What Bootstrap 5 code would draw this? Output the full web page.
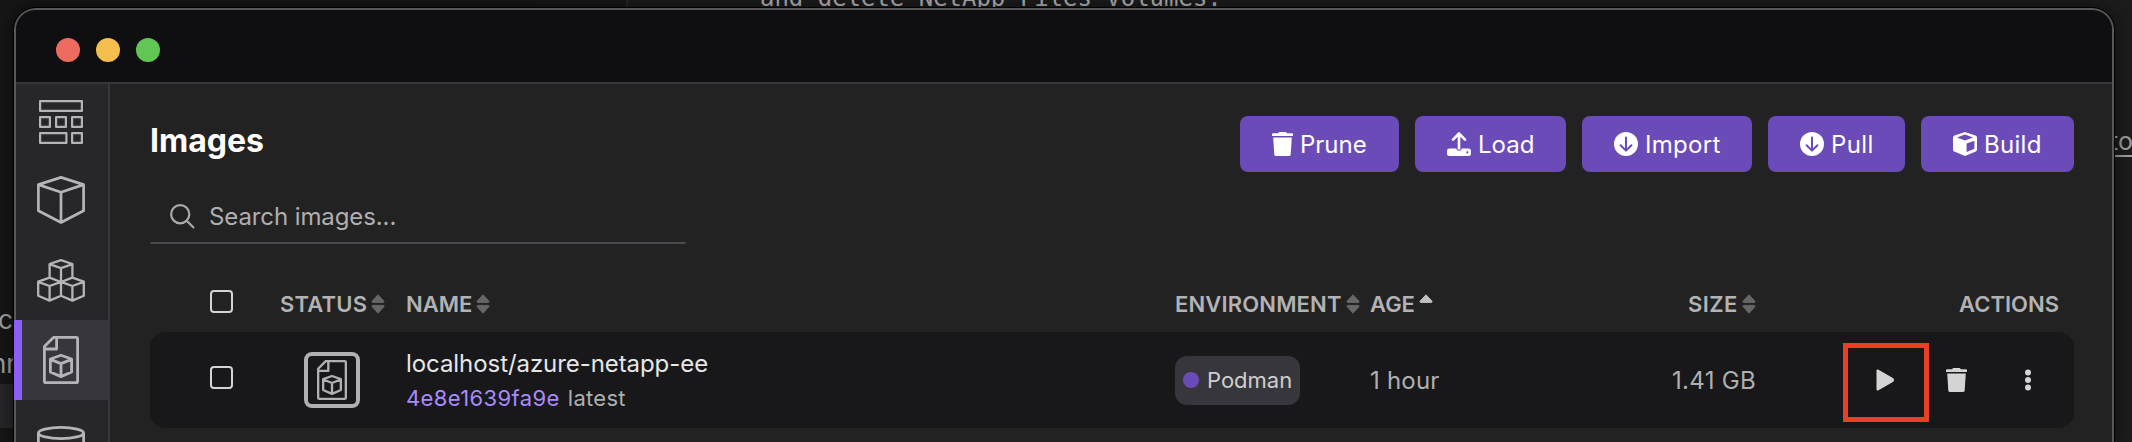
<!DOCTYPE html>
<html lang="en">
<head>
<meta charset="utf-8">
<title>Images</title>
<link href="https://cdn.jsdelivr.net/npm/bootstrap@5.3.0/dist/css/bootstrap.min.css" rel="stylesheet">
<style>
html,body{height:442px;overflow:hidden}
body{position:relative;background:linear-gradient(90deg,#161616 0,#161616 537px,#181818 538px,#181818 626px,#2a2a2a 626px,#2a2a2a 628px,#1c1c1c 628px);font-family:Inter,"Liberation Sans",sans-serif;color:#afafb1;font-size:24px;line-height:1}
svg{display:block;flex:none}
.desk-text{position:absolute;white-space:pre;line-height:1;color:#a2a2a2}
.desk-band{position:absolute;left:0;top:384px;width:14px;height:44px;background:#27272a}
.app-window{position:absolute;left:14px;top:8px;width:2100px;height:434px;border:2px solid #585858;border-bottom:0;border-radius:22px 22px 0 0;background:#222;box-shadow:0 0 0 1px #000,0 0 20px #0009}
.titlebar{height:74px;background:#0f0f11;border-bottom:2px solid #37363d;border-radius:20px 20px 0 0;padding:8px 0 0 40px;gap:16px}
.light{width:24px;height:24px;border-radius:50%}
.sidebar{width:94px;height:358px;background:#27272a;border-right:2px solid #37363d}
.side-item{height:80px;flex:none;color:#b5b5b7;padding-right:2px}
.side-item.first{height:76px}
.side-item.last{height:42px;padding-top:26px}
.side-item.current{background:#37363d;position:relative}
.side-item.current::before{content:"";position:absolute;left:-2px;width:8px;top:0;bottom:0;background:#8b5cf6}
.content{padding:32px 38px 0 40px}
h1{font-size:32px;font-weight:700;color:#fff;line-height:49px;margin:0}
.act{height:56px;border-radius:8px;background:#6a4bb8;color:#fff;padding:2px 0 0 32px;gap:7px;border:0}
.act svg,.find svg{margin-bottom:2px}
.find{width:536px;height:54px;margin-top:18px;border-bottom:2px solid #4b4a50;border-radius:2px;padding:2px 0 0 20px;gap:14px;letter-spacing:-.1px}
.rowgrid{display:grid;grid-template-columns:60px 70px 126px 769px 195px 270px 116px 307px;align-items:center}
.head{height:56px;margin-top:32px;font-weight:600;font-size:22px;color:#b3b3b5}
.data{height:96px;background:#18181a;border-radius:16px}
.cb{width:23px;height:23px;border:2px solid #d4d4d4;border-radius:4px;margin-bottom:5px}
.status-box{width:56px;height:56px;border:4px solid #b0b0b2;border-radius:8px;margin-left:24px;color:#b0b0b2}
.name-line{line-height:35px;white-space:nowrap}
.cell-text{padding-top:2px}
.sub-line{font-size:22px}
.img-id{color:#a78bfa;letter-spacing:.38px}
.pill{width:125px;height:49px;border-radius:12px;background:#37363d;padding-left:8px;gap:8px;color:#cfcfcf;font-size:22px}
.pill i{width:16px;height:16px;border-radius:50%;background:#6a4bb8}
.act-btn{width:71px;height:56px;color:#d4d4d4}
.marker{position:absolute;left:-7px;top:-9px;width:86px;height:79px;border:5px solid #ea4025}
</style>
<script src="https://cdn.jsdelivr.net/npm/bootstrap@5.3.0/dist/js/bootstrap.bundle.min.js"></script>
</head>
<body>
<svg width="0" height="0" class="position-absolute">
<defs>
<symbol id="sort" viewBox="0 0 14 20"><path d="M7 .8 13 7.2Q13.2 8.4 12.2 8.4H1.8Q.8 8.4 1 7.2ZM7 19.200 1 12.600Q.8 11.400 1.800 11.400H12.200Q13.200 11.400 13 12.600Z" fill="#666" stroke="#666" stroke-width="1" stroke-linejoin="round"/></symbol>
<symbol id="trash" viewBox="0 0 21 24"><path d="M6.2 1.2 7 0H14L14.8 1.2H20Q21 1.2 21 2.2V3.9H0V2.2Q0 1.2 1 1.2ZM1.2 5.4H19.8L18.7 22.4Q18.5 24 17 24H4Q2.5 24 2.3 22.4Z" fill="currentColor"/></symbol>
<symbol id="down" viewBox="0 0 24 24"><circle cx="12" cy="12" r="12" fill="currentColor"/><path d="M12 5.4V18M6.6 13.2 12 18.6 17.4 13.2" fill="none" stroke="#6a4bb8" stroke-width="2" stroke-linecap="round" stroke-linejoin="round"/></symbol>
<symbol id="imgfile" viewBox="0 0 36 48"><g fill="none" stroke="currentColor" stroke-width="2.8" stroke-linejoin="round"><path d="M10.5 1.4H33.2Q34.6 1.4 34.6 2.8V45.2Q34.6 46.6 33.2 46.6H2.8Q1.4 46.6 1.4 45.2V10.5ZM13.6 1.4V13H1.4"/><path d="M18 19.2 28.6 23V36L18 40.6 7.4 36V23ZM7.4 23.4 18 27.6 28.6 23.4M18 27.6V40.6"/></g></symbol>
</defs>
</svg>
<div class="desk-text" style="left:760px;top:-16px;font:24px/28px 'DejaVu Sans Mono',monospace;letter-spacing:-.02px;color:#b8b8b8">and delete NetApp Files Volumes.</div>
<div class="desk-text" style="left:-2px;top:307px;font-size:26px">c</div>
<div class="desk-text" style="left:-9px;top:351px;font-size:26px">nn</div>
<div class="desk-band"></div>
<div class="desk-text text-decoration-underline" style="left:2110px;top:129px;font-size:25px;text-underline-offset:5px">to</div>

<div class="app-window">
  <div class="titlebar d-flex align-items-center">
    <span class="light" style="background:#ed6a5f"></span><span class="light" style="background:#f5bf4f"></span><span class="light" style="background:#62c655"></span>
  </div>
  <div class="d-flex">
    <nav class="sidebar d-flex flex-column">
      <a class="side-item first d-flex align-items-center justify-content-center"><svg width="44" height="44" viewBox="0 0 44 44" fill="none" stroke="currentColor" stroke-width="2.2" stroke-linejoin="round"><path d="M1.1 1.1H42.9V10.9H1.1ZM1.1 17.1H10.9V26.9H1.1ZM17.1 17.1H26.9V26.9H17.1ZM33.1 17.1H42.9V26.9H33.1ZM1.1 33.1H27.4V42.9H1.1ZM33.1 33.1H42.9V42.9H33.1Z"/></svg></a>
      <a class="side-item d-flex align-items-center justify-content-center"><svg width="48" height="48" viewBox="0 0 48 48" fill="none" stroke="currentColor" stroke-width="2.7" stroke-linejoin="round"><path d="M24 1.4 46.6 8.6V34.8L24 46.5 1.4 34.8V8.6ZM1.4 8.6 24 16.2 46.6 8.6M24 16.2V46.5"/></svg></a>
      <a class="side-item d-flex align-items-center justify-content-center"><svg width="48" height="43" viewBox="0 0 48 43" fill="none" stroke="currentColor" stroke-width="2.3" stroke-linejoin="round"><path d="M24 1.2 35.4 5V18.6L24 23 12.6 18.6V5ZM12.6 5.2 24 9.2 35.4 5.2M24 9.2V23M12.6 18.6 24 23V36.8L12.6 41.6 1.2 36.8V22.6ZM1.2 22.8 12.6 27 24 22.8M12.6 27V41.6M35.4 18.6 46.8 22.6V36.8L35.4 41.6 24 36.8M24 22.8 35.4 27 46.8 22.8M35.4 27V41.6"/></svg></a>
      <a class="side-item current d-flex align-items-center justify-content-center"><svg width="36" height="48"><use href="#imgfile"/></svg></a>
      <a class="side-item last d-flex align-items-start justify-content-center"><svg width="48" height="16" viewBox="0 0 48 16" fill="none" stroke="currentColor" stroke-width="2.8"><ellipse cx="24" cy="7" rx="22.6" ry="5.6"/><path d="M1.4 7V16M46.6 7V16"/></svg></a>
    </nav>
    <main class="content flex-grow-1">
      <div class="d-flex justify-content-between align-items-start">
        <h1>Images</h1>
        <div class="d-flex gap-3">
          <button class="act d-flex align-items-center" style="width:159px"><svg width="21" height="24"><use href="#trash"/></svg>Prune</button>
          <button class="act d-flex align-items-center" style="width:151px"><svg width="24" height="24" viewBox="0 0 24 24"><path d="M2.5 16.6H9.4V17.2Q12 20.2 14.6 17.2V16.6H21.5Q24 16.6 24 19V21.5Q24 24 21.5 24H2.5Q0 24 0 21.5V19Q0 16.6 2.5 16.6ZM19.2 20.3A1.1 1.1 0 1 0 21.4 20.3A1.1 1.1 0 1 0 19.2 20.3Z" fill="#fff" fill-rule="evenodd"/><path d="M12 2V16.4M6 7.6 12 1.5 18 7.6" fill="none" stroke="#fff" stroke-width="2.6" stroke-linecap="round" stroke-linejoin="round"/></svg>Load</button>
          <button class="act d-flex align-items-center" style="width:170px;letter-spacing:.3px"><svg width="24" height="24"><use href="#down"/></svg>Import</button>
          <button class="act d-flex align-items-center" style="width:137px;letter-spacing:.4px"><svg width="24" height="24"><use href="#down"/></svg>Pull</button>
          <button class="act d-flex align-items-center" style="width:153px;letter-spacing:.3px"><svg width="24" height="24" viewBox="0 0 24 24"><path d="M12 0 22.5 3.6Q24 4.2 24 5.8V17.6Q24 19 22.8 19.6L12 24 1.2 19.6Q0 19 0 17.6V5.8Q0 4.2 1.5 3.6ZM12 2.6 4 5.5 12 8.4 20 5.5ZM13.6 11.4V20L21.4 16.8V8.7Z" fill="#fff" fill-rule="evenodd"/></svg>Build</button>
        </div>
      </div>
      <div class="find d-flex align-items-center"><svg width="25" height="25" viewBox="0 0 25 25" fill="none" stroke="#aaaaac" stroke-width="2.2"><circle cx="10.2" cy="10.2" r="9.1"/><path d="M16.7 16.7 24 24"/></svg>Search images...</div>

      <div class="rowgrid head">
        <span></span><span class="cb"></span>
        <span class="d-flex align-items-center"><span style="width:90.5px;letter-spacing:.2px">STATUS</span><svg width="14" height="20"><use href="#sort"/></svg></span>
        <span class="d-flex align-items-center"><span style="width:69.5px">NAME</span><svg width="14" height="20"><use href="#sort"/></svg></span>
        <span class="d-flex align-items-center"><span style="width:170.5px;letter-spacing:.15px">ENVIRONMENT</span><svg width="14" height="20"><use href="#sort"/></svg></span>
        <span class="d-flex align-items-center"><span style="width:49px">AGE</span><svg width="14" height="20" viewBox="0 0 14 20"><path d="M7 .8 13 7.2Q13.2 8.4 12.2 8.4H1.8Q.8 8.4 1 7.2Z" fill="#c0c0c2" stroke="#c0c0c2" stroke-width="1" stroke-linejoin="round"/></svg></span>
        <span class="d-flex align-items-center justify-content-end"><span style="width:54px;letter-spacing:.4px">SIZE</span><svg width="14" height="20"><use href="#sort"/></svg></span>
        <span class="text-end pe-1">ACTIONS</span>
      </div>
      <div class="rowgrid data">
        <span></span><span class="cb"></span>
        <span class="status-box d-flex align-items-center justify-content-center"><svg width="30" height="40"><use href="#imgfile"/></svg></span>
        <div class="cell-text">
          <div class="name-line" style="color:#e6e6e6;letter-spacing:-.07px">localhost/azure-netapp-ee</div>
          <div class="name-line sub-line d-flex"><span class="img-id">4e8e1639fa9e</span><span class="ms-2" style="letter-spacing:.3px">latest</span></div>
        </div>
        <span class="pill d-flex align-items-center"><i></i>Podman</span>
        <span class="cell-text" style="letter-spacing:.2px">1 hour</span>
        <span class="cell-text text-end" style="letter-spacing:.3px">1.41 GB</span>
        <div class="d-flex justify-content-end">
          <span class="act-btn position-relative d-flex align-items-center justify-content-center"><svg width="19" height="22" viewBox="0 0 19 22"><path d="M.5 1.5Q.8 0 2.5.8L17.3 9.3Q19 11 17.3 12.7L2.5 21.2Q.8 22 .5 20.5Z" fill="currentColor"/></svg><span class="marker"></span></span>
          <span class="act-btn d-flex align-items-center justify-content-center"><svg width="21" height="24"><use href="#trash"/></svg></span>
          <span class="act-btn d-flex align-items-center justify-content-center"><svg width="6" height="22" viewBox="0 0 6 22" fill="currentColor"><circle cx="3" cy="3.5" r="3"/><circle cx="3" cy="11" r="3"/><circle cx="3" cy="18.5" r="3"/></svg></span>
        </div>
      </div>
    </main>
  </div>
</div>
</body>
</html>
